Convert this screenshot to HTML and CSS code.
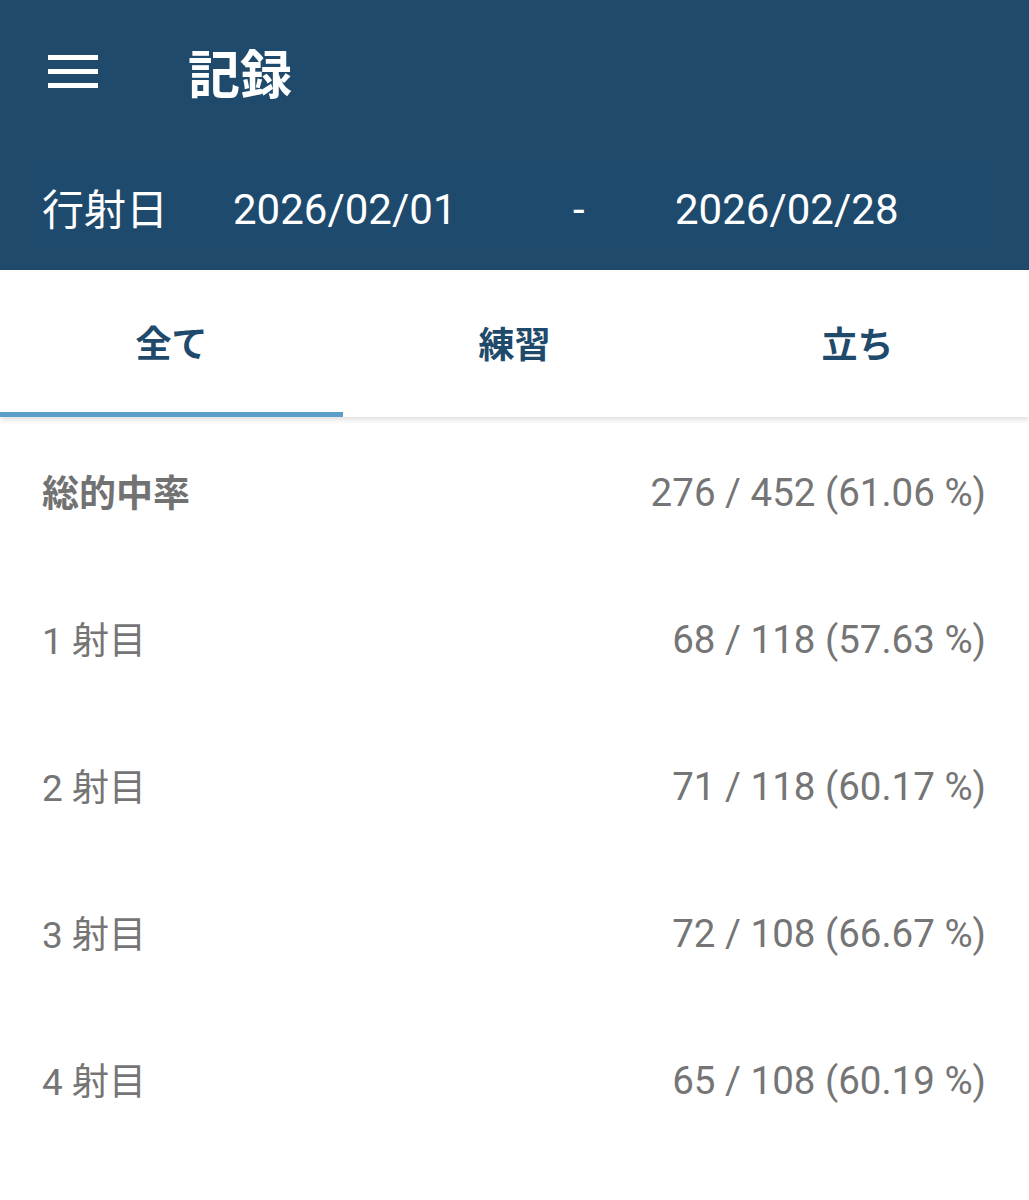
FILE: index.html
```html
<!DOCTYPE html>
<html lang="ja">
<head>
  <meta charset="UTF-8">
  <title>記録</title>
  <link rel="stylesheet" href="styles.css">
</head>
<body>

  <div class="header">
    <div class="toolbar">
      <div class="menu-icon">
        <span></span>
        <span></span>
        <span></span>
      </div>
      <div class="title">記録</div>
    </div>
    <div class="date-range">
      <div class="date-label">行射日</div>
      <div class="date from">2026/02/01</div>
      <div class="date-sep">-</div>
      <div class="date to">2026/02/28</div>
    </div>
  </div>

  <div class="tabs">
    <div class="tab active">全て</div>
    <div class="tab">練習</div>
    <div class="tab">立ち</div>
  </div>

  <div class="stats">
    <div class="row total">
      <div class="label">総的中率</div>
      <div class="value">276 / 452 (61.06 %)</div>
    </div>
    <div class="row">
      <div class="label">1 射目</div>
      <div class="value">68 / 118 (57.63 %)</div>
    </div>
    <div class="row">
      <div class="label">2 射目</div>
      <div class="value">71 / 118 (60.17 %)</div>
    </div>
    <div class="row">
      <div class="label">3 射目</div>
      <div class="value">72 / 108 (66.67 %)</div>
    </div>
    <div class="row">
      <div class="label">4 射目</div>
      <div class="value">65 / 108 (60.19 %)</div>
    </div>
  </div>

</body>
</html>
```

FILE: styles.css
```css
body {
  margin: 0;
  font-family: Roboto, "Noto Sans CJK JP", sans-serif;
  background: #fff;
  width: 1029px;
}

.header {
  background: #1f4a6b;
  height: 270px;
  display: flex;
  flex-direction: column;
}

.toolbar {
  display: flex;
  align-items: center;
  height: 145px;
  padding-left: 48px;
}

.menu-icon {
  display: flex;
  flex-direction: column;
  gap: 9px;
  width: 50px;
  margin-top: -2px;
}

.menu-icon span {
  display: block;
  height: 5px;
  background: #fff;
}

.title {
  color: #fff;
  font-size: 52px;
  font-weight: bold;
  margin-left: 90px;
  margin-top: -2px;
}

.date-range {
  display: flex;
  align-items: center;
  margin: 20px 42px 0 42px;
  height: 83px;
  background: #1e4a6d;
  color: #fff;
}

.date-label {
  font-size: 42px;
  width: 191px;
}

.date {
  font-size: 42px;
  padding-top: 6px;
}

.date.from {
  width: 340px;
}

.date-sep {
  font-size: 42px;
  width: 102px;
  padding-top: 6px;
}

.tabs {
  display: flex;
  height: 147px;
  background: #fff;
  box-shadow: 0 3px 5px rgba(0,0,0,0.12);
  position: relative;
}

.tab {
  flex: 1;
  display: flex;
  align-items: center;
  justify-content: center;
  font-size: 36px;
  font-weight: bold;
  color: #1f4a6b;
  padding-bottom: 4px;
  box-sizing: border-box;
}

.tab.active {
  border-bottom: 5px solid #5b9dcb;
  padding-bottom: 0;
}

.row {
  display: flex;
  justify-content: space-between;
  align-items: center;
  height: 147px;
  padding: 0 43px 0 42px;
}

.label {
  font-size: 37px;
  color: #757575;
}

.total .label {
  font-weight: bold;
  color: #727272;
}

.value {
  font-size: 38.5px;
  color: #757575;
  padding-top: 3px;
}
```
